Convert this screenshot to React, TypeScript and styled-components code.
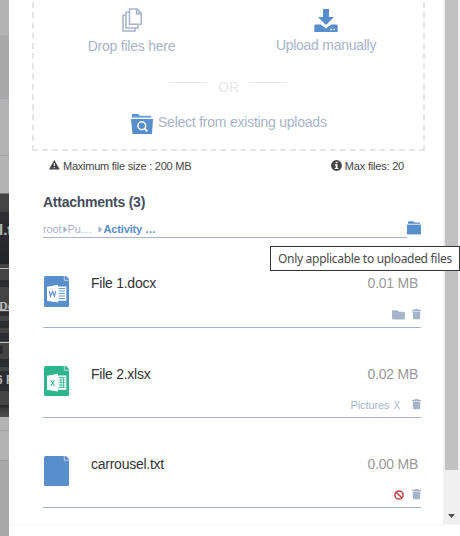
import React from 'react';
import styled, { createGlobalStyle } from 'styled-components';

const Global = createGlobalStyle`
  *, *::before, *::after { box-sizing: border-box; }
  html, body { margin: 0; padding: 0; overflow: hidden; background: #fff; }
  body { font-family: "Liberation Sans", Arial, sans-serif; }
  svg { display: block; flex: none; }
`;

const Screen = styled.div`
  position: relative;
  display: grid;
  grid-template-columns: 9px 434px 17px;
  grid-template-rows: 524px 12px;
  width: 460px;
  height: 536px;
  overflow: hidden;
`;

const Backdrop = styled.div`
  grid-row: 1 / 3;
  display: flex;
  flex-direction: column;
  overflow: hidden;
  background: #a9a9a9;
`;

const Strip = styled.div<{ $h: number; $bg: string }>`
  flex: none;
  height: ${(p) => p.$h}px;
  background: ${(p) => p.$bg};
`;

const StripText = styled.div<{ $size: number; $shift: number; $top: number; $serif?: boolean }>`
  font: bold ${(p) => p.$size}px/14px ${(p) => (p.$serif ? '"Liberation Serif", serif' : '"Liberation Sans", sans-serif')};
  padding-top: ${(p) => p.$top}px;
  margin-left: ${(p) => p.$shift}px;
  color: #b8b8b8;
  white-space: nowrap;
`;

const Body = styled.main`
  overflow: hidden;
  background: #fff;
  padding: 0 22px 0 34px;
`;

const Footer = styled.div`
  grid-column: 2 / 4;
  border-top: 1px solid #f4f4f4;
  background: #fff;
`;

const DropZone = styled.section`
  width: 393px;
  height: 200px;
  margin: -49px 0 0 -11px;
  padding-top: 57px;
  border: 2px dashed #e5e5e5;
  border-top: 0;
`;

const Choices = styled.div`
  display: grid;
  grid-template-columns: 195px 1fr;
`;

const Choice = styled.div`
  display: flex;
  flex-direction: column;
  align-items: center;
`;

const Label = styled.span<{ $spacing: number; $top?: number }>`
  font-size: 14px;
  line-height: 16px;
  margin-top: ${(p) => p.$top ?? 0}px;
  letter-spacing: ${(p) => p.$spacing}px;
  color: #a7b3c8;
  white-space: nowrap;
`;

const Divider = styled.div`
  display: flex;
  align-items: flex-start;
  margin: 24px 0 0 136px;
  height: 21px;
  color: #e7e8ea;
  font-size: 14px;
  line-height: 16px;
`;

const Rule = styled.div<{ $w: number }>`
  width: ${(p) => p.$w}px;
  height: 1px;
  margin-top: 4px;
  background: #e0e7ef;
`;

const OrText = styled.span`
  width: 43px;
  padding-top: 1px;
  text-align: center;
  letter-spacing: -0.3px;
`;

const Existing = styled.div`
  display: flex;
  gap: 5px;
  margin: 15px 0 0 97px;
`;

const Limits = styled.div`
  display: flex;
  justify-content: space-between;
  padding: 9px 17px 0 6px;
  height: 42px;
`;

const Limit = styled.div<{ $spacing: number }>`
  display: flex;
  gap: 3px;
  font-size: 11px;
  line-height: 13px;
  letter-spacing: ${(p) => p.$spacing}px;
  color: #444;
`;

const Heading = styled.h2`
  margin: 0;
  height: 26px;
  font-size: 14px;
  line-height: 18px;
  letter-spacing: -0.25px;
  color: #454d5c;
`;

const CrumbBar = styled.div`
  display: flex;
  width: 378px;
  height: 19px;
`;

const Crumbs = styled.div`
  display: flex;
  flex: 1;
  align-items: flex-start;
  padding-top: 4px;
  border-bottom: 1px solid #a7b3c8;
`;

const Crumb = styled.span<{ $w: number; $current?: boolean }>`
  width: ${(p) => p.$w}px;
  font-size: 11px;
  line-height: 13px;
  letter-spacing: -0.15px;
  font-weight: ${(p) => (p.$current ? 'bold' : 'normal')};
  color: ${(p) => (p.$current ? '#588ecb' : '#a7b3c8')};
  white-space: nowrap;
`;

const FolderButton = styled.div`
  width: 14px;
  padding-top: 2px;
`;

const Row = styled.article`
  display: grid;
  grid-template-columns: 48px 1fr auto;
  grid-template-rows: 66px 23px;
  width: 378px;
  height: 90px;
  border-bottom: 1px solid #a7b3c8;
`;

const RowIcon = styled.div`
  padding: 38px 0 0 1px;
`;

const FileName = styled.div<{ $top: number }>`
  padding-top: ${(p) => p.$top}px;
  font-size: 14px;
  line-height: 16px;
  letter-spacing: -0.25px;
  color: #333;
`;

const FileSize = styled(FileName)`
  padding-right: 3px;
  color: #999;
`;

const Actions = styled.div`
  grid-column: 1 / 4;
  display: flex;
  justify-content: flex-end;
  align-items: flex-start;
  padding-top: 5px;
  font-size: 11px;
  line-height: 13px;
  letter-spacing: -0.1px;
  color: #a7b3c8;
`;

const Slot = styled.div<{ $right: number; $top?: number; $size?: number }>`
  margin: ${(p) => p.$top ?? 0}px ${(p) => p.$right}px 0 0;
  font-size: ${(p) => p.$size ?? 11}px;
`;

const Scrollbar = styled.div`
  display: flex;
  flex-direction: column;
  align-items: center;
  background: #f0f0f0;
`;

const Thumb = styled.div`
  width: 13px;
  height: 470px;
  background: #c1c1c1;
`;

const ScrollArrow = styled.svg`
  margin-top: 44px;
`;

const Tooltip = styled.div`
  position: absolute;
  left: 270px;
  top: 246px;
  width: 190px;
  height: 25px;
  padding-left: 7px;
  border: 1px solid #333;
  background: #fff;
  color: #4c4c4c;
  font: 12px/24px "Noto Sans", "Open Sans", sans-serif;
  letter-spacing: -0.3px;
  white-space: nowrap;
`;

const lineText = {
  title: <StripText $size={15} $shift={-1} $top={11}>l.t</StripText>,
  link: <StripText $size={12} $shift={-1} $top={12} $serif>Do</StripText>,
  count: <StripText $size={12} $shift={-4} $top={2}>6 F</StripText>,
};

const strips: [number, string, React.ReactNode?][] = [
  [35, '#b3b3b3'], [63, '#a9a9a9'], [1, '#a1a3ac'], [56, '#b3b3b3'], [1, '#9fa0a4'], [37, '#b3b3b3'],
  [1, '#777'], [18, '#444444'],
  [52, 'linear-gradient(#2f2f33, #242529)', lineText.title],
  [4, '#444444'], [1, '#bdbdbd'], [11, '#444444'], [7, '#2b2c2f'],
  [23, '#444444', lineText.link],
  [1, '#bdbdbd'], [1, '#444444'], [4, '#2b2c2f'], [5, '#444444'], [7, '#2b2c2f'], [5, '#444444'],
  [8, '#2b2c2f'], [1, '#444444'], [1, '#bdbdbd'], [3, '#444444'],
  [8, 'linear-gradient(90deg, #292a2e 2px, #444444 3px)'], [5, '#444444'], [8, '#2b2c2f'], [4, '#444444'],
  [20, '#2b2c2f', lineText.count],
  [14, '#444444'], [12, 'linear-gradient(#292929 0 1px, #383838 3px, #4b4b4b 10px)'],
  [13, '#b3b3b3'], [1, '#9fa0a4'], [29, '#b3b3b3'], [1, '#999'], [76, '#a9a9a9'],
];

const CopyIcon = () => (
  <svg width="20" height="24" viewBox="0 0 20 24" fill="#fff" stroke="#a7b3c8" strokeWidth="1.5">
    <path d="M1 7.3h12v15.8H1z" />
    <path d="M4 4.3h12v15.6H4z" />
    <path d="M7.5 1h7.8l3.9 4v11.2H7.5z" />
    <path d="M14.6 1.2v4.6h4.3" fill="#c8d1df" />
  </svg>
);

const UploadIcon = () => (
  <svg width="24" height="24" viewBox="0 0 24 24" fill="#588ecb">
    <path d="M9 1h6v8h5l-8 8-8-8h5z" />
    <path d="M1.5 16.5h5.3l5.2 4 5.2-4h5.3l1.2 1V24H.3v-6.5z" />
    <path d="M16.3 20.8h1.5v1.4h-1.5zM19.3 20.8h1.5v1.4h-1.5z" fill="#fff" />
  </svg>
);

const SearchFolder = () => (
  <svg width="22" height="20" viewBox="0 0 22 20">
    <path d="M1 4V0h6l2 1.8h11V4z" fill="#588ecb" />
    <path d="M1.5 3.2h20" stroke="#bccfe6" />
    <path d="M0 5h22l-1 15H1.5z" fill="#588ecb" />
    <circle cx="10.8" cy="11.7" r="3.9" fill="none" stroke="#fff" strokeWidth="1.5" />
    <path d="m13.7 14.6 2.5 2.7" stroke="#fff" strokeWidth="1.8" />
  </svg>
);

const FolderIcon = () => (
  <svg width="14" height="14" viewBox="0 0 14 14" fill="#588ecb">
    <path d="M1 3V1.2q0-.9 1-.9h4l2 1.2h5V3z" />
    <path d="M0 3.6h14v9.8H0z" />
    <path d="M.5 3h13" stroke="#c5d5e9" strokeWidth=".7" />
  </svg>
);

const SmallFolder = () => (
  <svg width="13" height="10" viewBox="0 0 13 10" fill="#a7b3c8">
    <path d="M0 1.2Q0 .3 1 .3h4l2 1.5h5q.8 0 .8.8v6.2q0 .8-.8.8H1q-1 0-1-1z" />
  </svg>
);

const Trash = () => (
  <svg width="9" height="11" viewBox="0 0 9 11" fill="#a7b3c8">
    <path d="M0 .8h2.7L3 0h3l.3.8H9v1.1H0z" />
    <path d="M.7 2.5h7.6L8 9.5q0 .8-1 .8H2q-1 0-1-.8z" />
  </svg>
);

const Forbidden = () => (
  <svg width="10" height="10" viewBox="0 0 10 10" fill="none" stroke="#bd4545" strokeWidth="1.5">
    <circle cx="5" cy="5" r="4.1" />
    <path d="m2.2 2.2 5.6 5.6" />
  </svg>
);

const CrumbArrow = () => (
  <svg width="5" height="7" viewBox="0 0 5 7" fill="none">
    <path d="M.7.5v6" stroke="#a7b3c8" strokeWidth=".8" />
    <path d="m1 .5 3.4 3L1 6.5z" fill="#a7b3c8" />
  </svg>
);

const Warning = () => (
  <svg width="11" height="10" viewBox="0 0 12 10" preserveAspectRatio="none">
    <path d="m5.8 0 5.9 9.6H0z" fill="#444" />
    <path d="M5.8 3v3M5.8 7v1.3" stroke="#fff" strokeWidth="1.2" />
  </svg>
);

const Info = () => (
  <svg width="11" height="11" viewBox="0 0 11 11">
    <circle cx="5.5" cy="5.5" r="5.4" fill="#444" />
    <path d="M4.7 1.7h1.8v1.5H4.7zM3.9 4.2h2.6v3.7h.9v1.2H3.8V7.9h.9V5.4h-.8z" fill="#fff" />
  </svg>
);

type Kind = 'doc' | 'sheet' | 'text';

const FileIcon = ({ kind }: { kind: Kind }) => {
  const color = kind === 'sheet' ? '#2fb58d' : '#588ecb';
  const h = kind === 'doc' ? 31 : 30;
  return (
    <svg width="25" height={h} viewBox={`0 0 25 ${h}`}>
      <rect width="25" height={h} rx="1.5" fill={color} />
      <path d="M20.3 0v4.3H25" fill="none" stroke="#d9d5e6" strokeWidth=".9" />
      <path d="m22 0 3 3V0z" fill="#fff" />
      {kind !== 'text' && (
        <g transform={kind === 'doc' ? 'translate(0 1)' : undefined}>
          <path d="M13 9.5h9.3v14.3H13z" fill="#fff" />
          {kind === 'doc' ? (
            <path d="M14.5 11.5H21M14.5 14H21M14.5 16.5H21M14.5 19H21M14.5 21.5H21" stroke={color} strokeWidth=".9" />
          ) : (
            <path d="M14.5 11.5h7M14.5 14h7M14.5 16.5h7M14.5 19h7M14.5 21.5h7M17 11v11M19.5 11v11" stroke={color} strokeWidth=".8" />
          )}
          <path d="m3 9.7 11-1.9v17.6L3 23.7z" fill="#fff" />
          {kind === 'doc' ? (
            <path d="m5.3 14 1.3 5.4 1.9-5 1.9 5 1.3-5.4" fill="none" stroke={color} strokeWidth="1.1" />
          ) : (
            <path d="m6.7 14 3.8 5.7M10.5 14l-3.8 5.7" fill="none" stroke={color} strokeWidth="1.1" />
          )}
        </g>
      )}
    </svg>
  );
};

const files: { name: string; size: string; kind: Kind; top: number; action: React.ReactNode }[] = [
  { name: 'File 1.docx', size: '0.01 MB', kind: 'doc', top: 37, action: <Slot $right={7} $top={1}><SmallFolder /></Slot> },
  {
    name: 'File 2.xlsx', size: '0.02 MB', kind: 'sheet', top: 38,
    action: <><Slot $right={4}>Pictures</Slot><Slot $right={12} $size={10}>X</Slot></>,
  },
  { name: 'carrousel.txt', size: '0.00 MB', kind: 'text', top: 38, action: <Slot $right={8} $top={1}><Forbidden /></Slot> },
];

export default function App() {
  return (
    <>
      <Global />
      <Screen>
        <Backdrop>
          {strips.map(([h, bg, text], i) => <Strip key={i} $h={h} $bg={bg}>{text}</Strip>)}
        </Backdrop>
        <Body>
          <DropZone>
            <Choices>
              <Choice><CopyIcon /><Label $top={6} $spacing={-0.22}>Drop files here</Label></Choice>
              <Choice><UploadIcon /><Label $top={5} $spacing={-0.27}>Upload manually</Label></Choice>
            </Choices>
            <Divider><Rule $w={37} /><OrText>OR</OrText><Rule $w={36} /></Divider>
            <Existing><SearchFolder /><Label $spacing={-0.23}>Select from existing uploads</Label></Existing>
          </DropZone>
          <Limits>
            <Limit $spacing={-0.24}><Warning /><span>Maximum file size : 200 MB</span></Limit>
            <Limit $spacing={-0.2}><Info /><span>Max files: 20</span></Limit>
          </Limits>
          <Heading>Attachments (3)</Heading>
          <CrumbBar>
            <Crumbs>
              <Crumb $w={19.5}>root</Crumb>
              <Slot $right={0} $top={3}><CrumbArrow /></Slot>
              <Crumb $w={30.5}>Pu…</Crumb>
              <Slot $right={0.5} $top={3}><CrumbArrow /></Slot>
              <Crumb $w={60} $current>Activity …</Crumb>
            </Crumbs>
            <FolderButton><FolderIcon /></FolderButton>
          </CrumbBar>
          {files.map((f) => (
            <Row key={f.name}>
              <RowIcon><FileIcon kind={f.kind} /></RowIcon>
              <FileName $top={f.top}>{f.name}</FileName>
              <FileSize $top={f.top}>{f.size}</FileSize>
              <Actions>{f.action}<Trash /></Actions>
            </Row>
          ))}
        </Body>
        <Scrollbar>
          <Thumb />
          <ScrollArrow width="7" height="4" viewBox="0 0 7 4"><path d="M0 0h7L3.5 4z" fill="#505050" /></ScrollArrow>
        </Scrollbar>
        <Footer />
        <Tooltip>Only applicable to uploaded files</Tooltip>
      </Screen>
    </>
  );
}
